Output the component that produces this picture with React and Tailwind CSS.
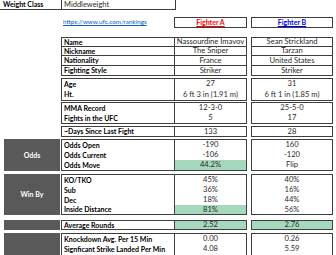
import React from "react";

const H = {
  8: "h-[8px]",
  9: "h-[9px]",
  10: "h-[10px]",
  11: "h-[11px]",
};

const LINE = "border-[#3f3f3f]";

const Cell = ({ h, children, green, left, bold, divider }) => (
  <>
    <div
      className={`${H[h]} flex items-center ${left ? "pl-[2px]" : "justify-center"} ${
        green ? "bg-[#a6d8bd]" : ""
      } ${bold ? "font-bold text-black" : "text-[7.6px] text-[#2b2b2b]"} whitespace-nowrap`}
    >
      {children}
    </div>
    {divider && <div className="h-px bg-[#3f3f3f]" />}
  </>
);

const Block = ({ side, rows, divided, className = "" }) => (
  <div className={`flex ${className}`}>
    <div className="w-[61px] pl-[4px] pr-px">
      {side !== undefined && (
        <div className="h-full bg-[#595959] text-white font-bold flex items-center justify-center">
          {side}
        </div>
      )}
    </div>
    <div className={`w-[114px] border ${LINE}`}>
      {rows.map((r, i) => (
        <Cell key={i} h={r.h} left bold divider={divided && i < rows.length - 1}>
          {r.label}
        </Cell>
      ))}
    </div>
    <div className={`w-[72px] border border-l-0 ${LINE}`}>
      {rows.map((r, i) => (
        <Cell key={i} h={r.h} green={r.ga} divider={divided && i < rows.length - 1}>
          {r.a}
        </Cell>
      ))}
    </div>
    <div className="w-[4px]" />
    <div className={`w-[82px] border ${LINE}`}>
      {rows.map((r, i) => (
        <Cell key={i} h={r.h} green={r.gb} divider={divided && i < rows.length - 1}>
          {r.b}
        </Cell>
      ))}
    </div>
  </div>
);

const bio = [
  { label: "Name", a: "Nassourdine Imavov", b: "Sean Strickland", h: 8 },
  { label: "Nickname", a: "The Sniper", b: "Tarzan", h: 8 },
  { label: "Nationality", a: "France", b: "United States", h: 9 },
  { label: "Fighting Style", a: "Striker", b: "Striker", h: 9 },
];

const size = [
  { label: "Age", a: "27", b: "31", h: 10 },
  { label: "Ht.", a: "6 ft 3 in (1.91 m)", b: "6 ft 1 in (1.85 m)", h: 11 },
];

const record = [
  { label: "MMA Record", a: "12-3-0", b: "25-5-0", h: 10 },
  { label: "Fights in the UFC", a: "5", b: "17", h: 10 },
];

const layoff = [{ label: "~Days Since Last Fight", a: "133", b: "28", h: 9 }];

const odds = [
  { label: "Odds Open", a: "-190", b: "160", h: 10 },
  { label: "Odds Current", a: "-106", b: "-120", h: 10 },
  { label: "Odds Move", a: "44.2%", b: "Flip", h: 10, ga: true },
];

const winBy = [
  { label: "KO/TKO", a: "45%", b: "40%", h: 10 },
  { label: "Sub", a: "36%", b: "16%", h: 10 },
  { label: "Dec", a: "18%", b: "44%", h: 10 },
  { label: "Inside Distance", a: "81%", b: "56%", h: 9, ga: true },
];

const rounds = [{ label: "Average Rounds", a: "2.52", b: "2.76", h: 8, ga: true, gb: true }];

const striking = [
  { label: "Knockdown Avg. Per 15 Min", a: "0.00", b: "0.26", h: 10 },
  { label: "Signficant Strike Landed Per Min", a: "4.08", b: "5.59", h: 10 },
  { label: "", a: "", b: "", h: 10 },
];

export default function App() {
  return (
    <div className="w-[336px] h-[255px] overflow-hidden bg-white font-['Lato',sans-serif] text-[7px] leading-none">
      {/* weight class */}
      <div className={`flex h-[10px] w-[176px] border-b border-r ${LINE}`}>
        <div className={`w-[62px] pl-[3px] border-r ${LINE} font-bold text-black flex items-center`}>
          Weight Class
        </div>
        <div className="pl-[2px] flex items-center text-[7.5px] text-[#2b2b2b]">Middleweight</div>
      </div>

      {/* link + fighter headers */}
      <div className="flex h-[11px] mt-[7px]">
        <div className="w-[174px] pl-[63px] flex items-center">
          <span className="text-[6.3px] text-[#0563c1] underline">https://www.ufc.com/rankings</span>
        </div>
        <div className={`w-[73px] border ${LINE} flex items-center justify-center`}>
          <span className="font-bold text-[#ff0000] underline">Fighter A</span>
        </div>
        <div className="w-[4px]" />
        <div className={`w-[82px] border ${LINE} flex items-center justify-center`}>
          <span className="font-bold text-[#0000ee] underline">Fighter B</span>
        </div>
      </div>

      <Block rows={bio} divided className="mt-[9px]" />
      <Block rows={size} className="mt-[2px]" />
      <Block rows={record} className="mt-[1px]" />
      <Block rows={layoff} className="mt-[2px]" />
      <Block side="Odds" rows={odds} className="mt-[2px]" />
      <Block side="Win By" rows={winBy} className="mt-[3px]" />
      <Block side="" rows={rounds} className="mt-[5px]" />
      <Block side="" rows={striking} className="mt-[3px]" />
    </div>
  );
}
